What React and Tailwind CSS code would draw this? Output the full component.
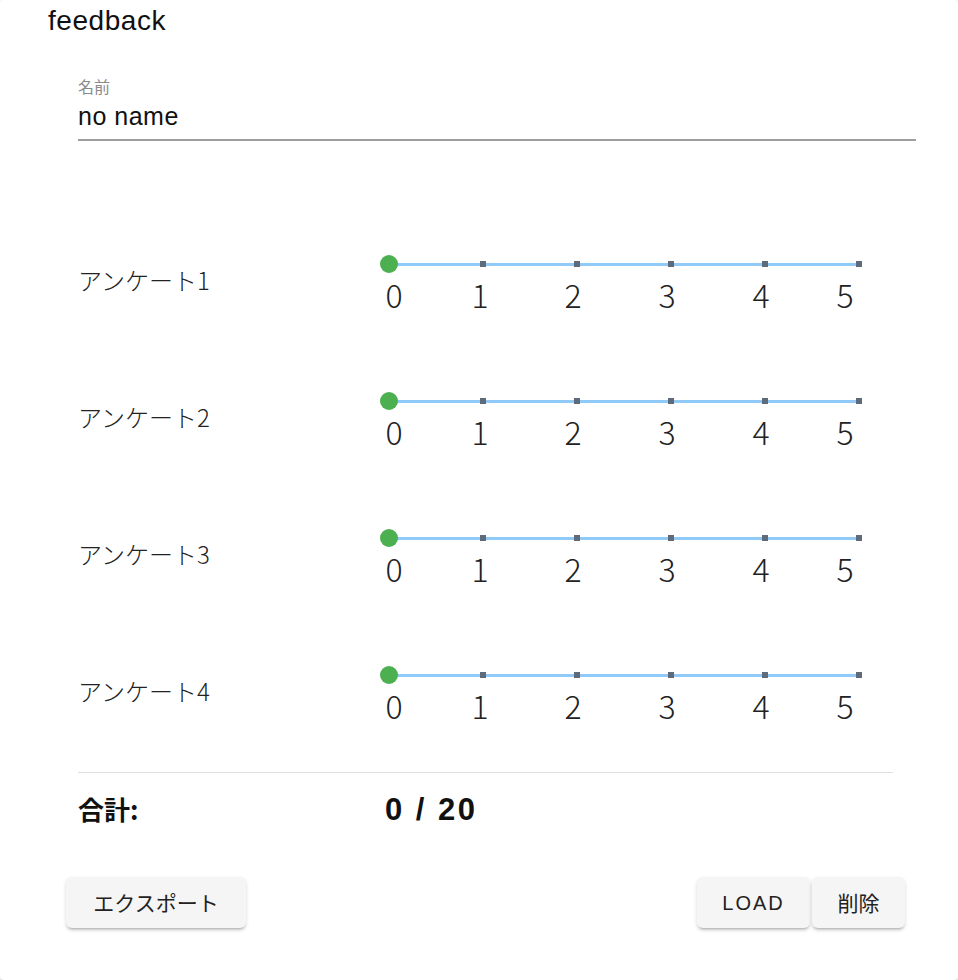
import React from 'react';

const jp = "font-['Noto_Sans_CJK_JP','Noto_Sans',sans-serif]";
const latin = "font-['Liberation_Sans','Noto_Sans_CJK_JP',sans-serif]";

// label nudges relative to each tick, as in the screenshot
const ticks = [
  { v: 0, pos: 'left-[5px]' },
  { v: 1, pos: 'left-[-3px]' },
  { v: 2, pos: 'left-[-4px]' },
  { v: 3, pos: 'left-[-4px]' },
  { v: 4, pos: 'left-[-4px]' },
  { v: 5, pos: 'left-[-14px]' },
];

const questions = ['アンケート1', 'アンケート2', 'アンケート3', 'アンケート4'];

const Slider = () => (
  <div className="relative w-[470px] h-[100px]">
    <div className="absolute left-0 right-0 top-[19px] h-[3px] bg-[#90caf9]" />
    <div className="absolute left-0 right-0 top-[20px] flex justify-between">
      {ticks.map((t) => (
        <div key={t.v} className="relative w-0 h-0">
          {t.v > 0 && (
            <div className="absolute left-[-3px] top-[-3px] w-[6px] h-[6px] bg-[#5f6b7a]" />
          )}
          <div
            className={`absolute top-[12px] -translate-x-1/2 text-[32px] leading-[36px] font-light text-[#222] ${jp} ${t.pos}`}
          >
            {t.v}
          </div>
        </div>
      ))}
    </div>
    <div className="absolute left-[-9px] top-[11px] w-[18px] h-[18px] rounded-full bg-[#4caf50]" />
  </div>
);

const btn =
  'h-[51px] rounded-[6px] bg-[#f5f5f5] shadow-[0_3px_3px_-2px_rgba(0,0,0,0.25),0_2px_4px_rgba(0,0,0,0.14)] text-[#222]';

export default function App() {
  return (
    <div className="min-h-screen bg-white">
      <div className="w-[958px] h-[980px] bg-white rounded-[4px] shadow-[0_1px_3px_rgba(0,0,0,0.25)] overflow-hidden">
        <div className={`pt-[7px] pl-[48px] h-[40px] text-[28px] tracking-[0.02em] leading-none text-[#111] ${latin}`}>
          feedback
        </div>

        <div className="pl-[78px] w-[916px]">
          <div className={`mt-[38px] text-[16px] leading-none text-[#8a8a8a] ${jp}`}>名前</div>
          <div className={`mt-[10px] h-[35px] text-[25px] tracking-[0.02em] leading-none text-[#111] ${latin}`}>no name</div>
          <div className="h-[2px] bg-[#9e9e9e]" />

          <div className="mt-[103px] flex flex-col gap-[37px]">
            {questions.map((q) => (
              <div key={q} className="flex">
                <div className={`w-[311px] pt-[24px] text-[24px] leading-none font-light text-[#222] ${jp}`}>
                  {q}
                </div>
                <Slider />
              </div>
            ))}
          </div>

          <div className="mt-[17px] w-[815px] h-[1px] bg-[#e0e0e0]" />

          <div className="mt-[20px] flex items-center h-[32px]">
            <div className={`w-[307px] text-[26px] leading-none font-semibold text-[#111] ${jp}`}>合計:</div>
            <div className={`text-[31px] leading-none font-bold tracking-[0.08em] text-[#111] ${latin}`}>0 / 20</div>
          </div>
        </div>

        <div className="mt-[52px] pl-[66px] w-[905px] flex justify-between">
          <button className={`w-[180px] text-[21px] ${btn} ${jp}`}>
            エクスポート
          </button>
          <div className="flex gap-[2px]">
            <button className={`w-[113px] text-[20px] tracking-[0.1em] ${btn} ${latin}`}>
              LOAD
            </button>
            <button className={`w-[93px] text-[21px] ${btn} ${jp}`}>
              削除
            </button>
          </div>
        </div>
      </div>
    </div>
  );
}
